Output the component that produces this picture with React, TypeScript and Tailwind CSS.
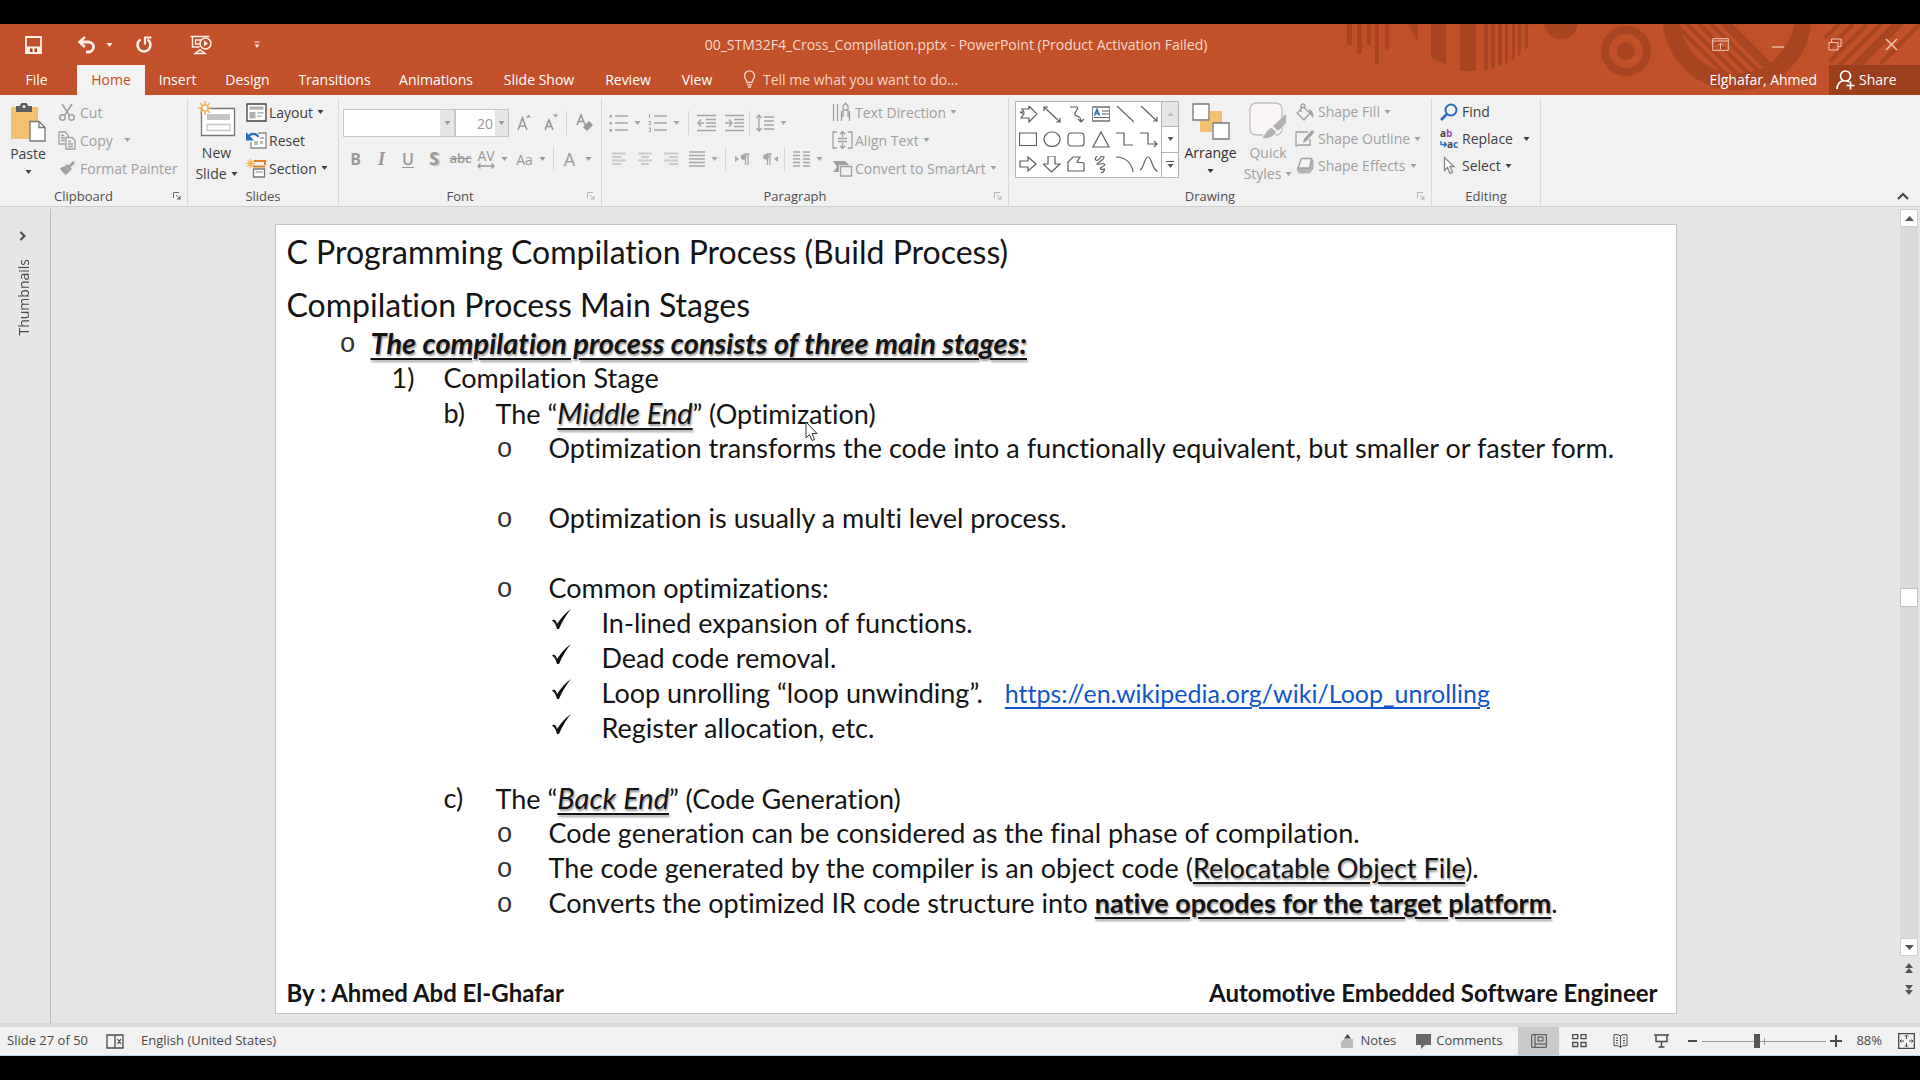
import type { ReactNode } from "react";

/* ---------- small building blocks ---------- */

function Svg({ w, h, children, className = "" }: { w: number; h: number; children: ReactNode; className?: string }) {
  return (
    <svg
      width={w}
      height={h}
      viewBox={`0 0 ${w} ${h}`}
      fill="none"
      stroke="currentColor"
      strokeWidth="1.3"
      className={"shrink-0 " + className}
      aria-hidden="true"
    >
      {children}
    </svg>
  );
}

function Caret({ className = "" }: { className?: string }) {
  return (
    <Svg w={7} h={4} className={className}>
      <path d="M0.5 0h6L3.5 4z" fill="currentColor" stroke="none" />
    </Svg>
  );
}

function Launcher({ className = "" }: { className?: string }) {
  return (
    <button aria-label="Open dialog" className={"absolute right-0.5 bottom-0 flex h-5 w-3 items-center " + className}>
      <Svg w={8} h={8}>
        <path d="M0.5 6V0.5H6M3 3l2 2" strokeWidth="1" />
        <path d="M7.5 3.5v4h-4z" fill="currentColor" stroke="none" />
      </Svg>
    </button>
  );
}

function Group({ label, width, labelPad = "", launcher, children }: { label: string; width: string; labelPad?: string; launcher?: string; children: ReactNode }) {
  return (
    <section aria-label={label} className={"relative flex shrink-0 flex-col border-r border-[#d8d8d8] " + width}>
      <div className="flex h-[88px]">{children}</div>
      <div className={"text-center text-[13px] leading-5 text-[#505050] " + labelPad}>{label}</div>
      {launcher && <Launcher className={launcher} />}
    </section>
  );
}

function RowButton({ icon, label, caret, tone, gap = "ml-[5px]" }: { icon: ReactNode; label: string; caret?: boolean; tone: string; gap?: string }) {
  return (
    <button className={"flex items-center gap-0.5 text-[14px] whitespace-nowrap " + tone}>
      <span className="flex w-[22px] justify-center">{icon}</span>
      <span>{label}</span>
      {caret && <Caret className={gap} />}
    </button>
  );
}

function Cell({ w, label, children }: { w: string; label: string; children: ReactNode }) {
  return (
    <button aria-label={label} className={"flex h-7 shrink-0 items-center justify-center gap-1.5 " + w}>
      {children}
    </button>
  );
}

function Divider() {
  return <span className="h-6 w-px shrink-0 bg-[#d4d4d4]" />;
}

const DARK = "text-[#3f3f3f]";
const DIM = "text-[#a0a0a0]";

/* ---------- title bar ---------- */

function Decoration() {
  return (
    <svg width="580" height="71" viewBox="0 0 580 71" className="absolute top-0 right-0" fill="#a94522" aria-hidden="true">
      <defs>
        <clipPath id="disc">
          <circle cx="397" cy="-8" r="58" />
        </clipPath>
      </defs>
      <path d="M7 0h5v21H7zM17 0h5v30h-5zM27 0h4v21h-4zM35 0h4v40h-4zM45 0h4v26h-4z" />
      <path d="M68 0h10v18zM91 0h15v41L91 33zM120 0h16v47h-16z" />
      <path d="M144 0h4v46h-4zM151 0h4v44l-4 1zM158 0h4v41l-4 2zM165 0h3v38l-3 2zM172 0h3v34l-3 3zM178 0h3v29l-3 3zM185 0h3v22l-3 4zM192 0h2v4z" />
      <circle cx="221" cy="-2" r="17" />
      <circle cx="286" cy="27" r="21" fill="none" stroke="#a94522" strokeWidth="8" />
      <circle cx="286" cy="27" r="9" />
      <circle cx="397" cy="-8" r="66" fill="none" stroke="#a94522" strokeWidth="17" />
      <g clipPath="url(#disc)" stroke="#a94522" strokeWidth="4">
        <path d="M335 0l60 60M347 0l60 60M359 0l60 60M371 0l60 60" />
        <path d="M384 -2l60 60" strokeWidth="9" />
      </g>
      <g stroke="#a94522" strokeWidth="4">
        <path d="M499 0l-14 14M513 0l-24 24M527 0l-38 38M541 0l-46 46" />
        <path d="M562 -4l-48 48" strokeWidth="9" />
        <path d="M580 0l-40 40" />
      </g>
    </svg>
  );
}

const tabs: [string, string][] = [
  ["Insert", "w-[65px]"],
  ["Design", "w-[75px]"],
  ["Transitions", "w-[99px]"],
  ["Animations", "w-[104px]"],
  ["Slide Show", "w-[102px]"],
  ["Review", "w-[76px]"],
  ["View", "w-[62px]"],
];

function Header() {
  return (
    <header className="relative shrink-0 bg-[#c2502a] text-white">
      <Decoration />
      <div className="relative grid h-[41px] grid-cols-[1fr_auto_1fr] items-center text-[#fdeee6]">
        <div className="flex items-center pl-[25px]">
          <button aria-label="Save">
            <Svg w={17} h={18}>
              <path d="M1 1h15v16H1z" strokeWidth="1.8" />
              <path d="M1 10.500h15v6H1z" fill="currentColor" stroke="none" />
              <path d="M5 12.500h2.500v3.500H5zM9.500 12.500H12v3.500H9.500z" fill="#b03c16" stroke="none" />
            </Svg>
          </button>
          <button aria-label="Undo" className="ml-[35px]">
            <Svg w={19} h={18}>
              <path d="M3 6h8.500a5 5 0 0 1 0 10H9" strokeWidth="2.800" />
              <path d="M8 1L2.500 6 8 11" strokeWidth="2.600" />
            </Svg>
          </button>
          <button aria-label="Undo list" className="ml-2.5">
            <Caret />
          </button>
          <button aria-label="Redo" className="ml-[22px]">
            <Svg w={18} h={18}>
              <path d="M5.500 3.500a6.500 6.500 0 1 0 7 0" strokeWidth="2.600" />
              <path d="M10 8.500V1.500h6.500" strokeWidth="2.200" />
            </Svg>
          </button>
          <button aria-label="Start from beginning" className="ml-[37px]">
            <Svg w={23} h={20}>
              <path d="M0.500 1.500h19M2.500 2v10h7M10 14v2M5 18.500l4-3h2l4 3z" strokeWidth="1.500" />
              <path d="M5.500 5h5v4h-5z" />
              <circle cx="15.500" cy="8.500" r="5.500" fill="#c2502a" strokeWidth="1.500" />
              <path d="M14 5.500l4 3-4 3z" fill="currentColor" stroke="none" />
            </Svg>
          </button>
          <button aria-label="Customize quick access toolbar" className="ml-[41px]">
            <Svg w={6} h={8}>
              <path d="M0.500 1h5" strokeWidth="1" />
              <path d="M0.500 3.500h5L3 7z" fill="currentColor" stroke="none" />
            </Svg>
          </button>
        </div>
        <h1 className="pr-2 text-[14px] text-[#f6d9cb]">00_STM32F4_Cross_Compilation.pptx - PowerPoint (Product Activation Failed)</h1>
        <div className="flex items-center justify-end pr-[22px] text-[#f0c6b4]">
          <button aria-label="Ribbon display options">
            <Svg w={17} h={13}>
              <path d="M0.700 0.700h15.600v11.600H0.700zM0.700 3h15.600M8.500 11V5.500M5.500 8l3-3 3 3" strokeWidth="1" />
            </Svg>
          </button>
          <button aria-label="Minimize" className="ml-[42px]">
            <Svg w={14} h={13}>
              <path d="M1 9h12" />
            </Svg>
          </button>
          <button aria-label="Restore" className="ml-[43px]">
            <Svg w={14} h={13}>
              <path d="M1 4.500h9V12H1zM3.500 4V1H13v7.500h-3" strokeWidth="1" />
            </Svg>
          </button>
          <button aria-label="Close" className="ml-[43px]">
            <Svg w={13} h={13}>
              <path d="M1 1l11 11M12 1L1 12" strokeWidth="1.500" />
            </Svg>
          </button>
        </div>
      </div>
      <nav aria-label="Ribbon tabs" className="relative flex h-[30px] items-stretch text-[14px]">
        <button className="w-[77px] pr-1 pb-0.5">File</button>
        <button className="w-[68px] bg-[#f3f3f3] pb-0.5 text-[#cb4a21]">Home</button>
        {tabs.map(([name, w]) => (
          <button key={name} className={"pb-0.5 " + w}>
            {name}
          </button>
        ))}
        <label className="ml-[15px] flex items-center gap-[7px] pb-0.5 text-[#f6d5c6]">
          <Svg w={13} h={18}>
            <path d="M4 12.500C4 10 1.500 9 1.500 5.800a5 5 0 0 1 10 0C11.500 9 9 10 9 12.500zM4 14.800h5M5 17h3" />
          </Svg>
          <input
            type="text"
            aria-label="Tell me what you want to do"
            placeholder="Tell me what you want to do..."
            className="w-[220px] bg-transparent text-[14px] outline-none placeholder:text-[#f6d5c6]"
          />
        </label>
        <button className="ml-auto pr-3 pb-0.5">Elghafar, Ahmed</button>
        <button className="flex w-[91px] items-center gap-1 bg-[#9c3f1d] pb-0.5 pl-[7px]">
          <Svg w={19} h={21}>
            <circle cx="9.500" cy="7" r="5" strokeWidth="1.700" />
            <path d="M1 20c0-4 2-7 6-8.500M11 11.500l2 1.500M14.500 12.500v8M10.500 16.500h8" strokeWidth="1.700" />
          </Svg>
          Share
        </button>
      </nav>
    </header>
  );
}

/* ---------- ribbon groups ---------- */

function ClipboardGroup() {
  return (
    <Group label="Clipboard" width="w-[188px]" labelPad="pr-5" launcher="text-[#666]">
      <button className={"flex w-[56px] flex-col items-center pt-[5px] text-[14px] leading-5 " + DARK}>
        <Svg w={36} h={39}>
          <path d="M1 4h27v32H1z" fill="#f2c06e" stroke="none" />
          <path d="M6 3h4a4 3.500 0 0 1 8 0h4v6H6z" fill="#5d5d5d" stroke="none" />
          <circle cx="14" cy="3.500" r="1.500" fill="#f1f1f1" stroke="none" />
          <path d="M20 18.500h9l6 6V38H20z" fill="#fff" stroke="#777" />
          <path d="M29 18.500v6h6" stroke="#777" />
        </Svg>
        <span className="mt-0.5">Paste</span>
        <Caret className="mt-1.5" />
      </button>
      <div className="grid auto-rows-[28px]">
        <RowButton
          tone={DIM}
          label="Cut"
          icon={
            <Svg w={16} h={18}>
              <path d="M3 1l7.500 11.500M13 1L5.500 12.500" strokeWidth="1.600" />
              <circle cx="3.500" cy="14.500" r="2.700" strokeWidth="1.500" />
              <circle cx="12.500" cy="14.500" r="2.700" strokeWidth="1.500" />
            </Svg>
          }
        />
        <RowButton
          tone={DIM}
          label="Copy"
          caret
          gap="ml-[9px]"
          icon={
            <Svg w={18} h={19}>
              <path d="M7 13H1V1h6l3 3v2M3 4.500h3M3 7h4M3 9.500h4" />
              <path d="M8 6.500h6l3 3V18H8zM10 10.500h3M10 13h5M10 15.500h5" />
            </Svg>
          }
        />
        <RowButton
          tone={DIM}
          label="Format Painter"
          icon={
            <Svg w={17} h={16}>
              <path d="M1 8l5-2 5 5-4 4c-2-1-5-4-6-7z" fill="currentColor" stroke="none" />
              <path d="M7 5l5 5M10 7l5-5" strokeWidth="3" />
            </Svg>
          }
        />
      </div>
    </Group>
  );
}

function SlidesGroup() {
  return (
    <Group label="Slides" width="w-[151px]">
      <button className={"flex w-[57px] flex-col items-center pt-[3px] text-[14px] leading-[21px] " + DARK}>
        <Svg w={38} h={38}>
          <path d="M3.500 7.500h33v27h-33z" fill="#fff" stroke="#777" />
          <path d="M9 13h23v6H9z" fill="#c4c4c4" stroke="none" />
          <path d="M9 23.500h23v6H9z" stroke="#c8c8c8" />
          <path d="M7 0v14M0 7h14M2 2l10 10M12 2L2 12" stroke="#eeb75c" strokeWidth="1.600" />
          <circle cx="7" cy="7" r="3" fill="#fff" stroke="#eeb75c" strokeWidth="1.600" />
        </Svg>
        <span className="mt-[3px]">New</span>
        <span className="flex items-center gap-1">
          Slide <Caret />
        </span>
      </button>
      <div className="grid auto-rows-[28px]">
        <RowButton
          tone={DARK}
          label="Layout"
          caret
          gap="ml-[2px]"
          icon={
            <Svg w={21} h={19}>
              <path d="M1 1h19v17H1z" fill="#fff" />
              <path d="M3.500 3.500h14v3h-14zM3.500 9h6v6.500h-6zM11.500 9h6v1.500h-6zM11.500 12.500h4v1.500h-4z" fill="#b0b0b0" stroke="none" />
            </Svg>
          }
        />
        <RowButton
          tone={DARK}
          label="Reset"
          icon={
            <Svg w={21} h={18}>
              <path d="M12 2h8v15H5v-6" fill="#fff" stroke="#888" />
              <path d="M8 10h4v4H8zM14 6h4v2h-4zM14 10h3v3h-3z" fill="#b8b8b8" stroke="none" />
              <path d="M2 6.500C4 2 10 1.500 12.500 6" stroke="#2b6cb8" strokeWidth="2.200" />
              <path d="M0 1v8.500h8z" fill="#2b6cb8" stroke="none" />
            </Svg>
          }
        />
        <RowButton
          tone={DARK}
          label="Section"
          caret
          gap="ml-[2px]"
          icon={
            <Svg w={21} h={19}>
              <path d="M8 2h11v4" stroke="#e0802f" strokeWidth="2.200" />
              <path d="M7 7.500h12" stroke="#e0802f" strokeWidth="2" />
              <path d="M7.500 10h11v8h-11z" fill="#fff" stroke="#777" />
              <path d="M9.500 13h7" stroke="#999" />
              <path d="M4.500 0v9M0 4.500h9M1.500 1.500l6 6M7.500 1.500l-6 6" stroke="#eeb75c" strokeWidth="1.200" />
            </Svg>
          }
        />
      </div>
    </Group>
  );
}

function FontGroup() {
  return (
    <Group label="Font" width="w-[263px]" labelPad="pr-5" launcher="text-[#b5b5b5]">
      <div className="flex flex-col pl-1">
        <div className="mt-[11px] flex h-7 items-center text-[#999]">
          <label className="relative flex shrink-0">
            <select aria-label="Font" className="h-7 w-[112px] appearance-none border border-[#c6c6c6] bg-white text-[14px]">
              <option></option>
            </select>
            <span className="pointer-events-none absolute inset-y-px right-px flex w-[14px] items-center justify-center bg-[#e6e6e6]">
              <Caret />
            </span>
          </label>
          <label className="relative flex shrink-0">
            <select aria-label="Font size" className="h-7 w-[54px] appearance-none border border-[#c6c6c6] bg-white pl-[21px] text-[14px] text-[#999]">
              <option>20</option>
            </select>
            <span className="pointer-events-none absolute inset-y-px right-px flex w-[13px] items-center justify-center bg-[#e6e6e6]">
              <Caret />
            </span>
          </label>
          <Cell w="w-[30px]" label="Increase font size">
            <Svg w={14} h={18}>
              <path d="M1 16L5.500 4 10 16M2.500 12h6" strokeWidth="1.600" />
              <path d="M9 3.500l2.500-3 2.500 3z" fill="currentColor" stroke="none" />
            </Svg>
          </Cell>
          <Cell w="w-[23px]" label="Decrease font size">
            <Svg w={14} h={18}>
              <path d="M1 16L5 6l4 10M2.500 12.500h5" strokeWidth="1.600" />
              <path d="M9 0.500h5l-2.500 3z" fill="currentColor" stroke="none" />
            </Svg>
          </Cell>
          <span className="w-1" />
          <Divider />
          <Cell w="w-[34px]" label="Clear formatting">
            <Svg w={17} h={18}>
              <path d="M1 11L5 1l4 10M2.500 7.500h5" strokeWidth="1.600" />
              <path d="M7 13l6-6 4 4-6 6z" fill="currentColor" stroke="none" />
            </Svg>
          </Cell>
        </div>
        <div className="mt-[8px] flex h-7 items-center text-[16px] text-[#999]">
          <Cell w="w-[25px]" label="Bold">
            <b>B</b>
          </Cell>
          <Cell w="w-[27px]" label="Italic">
            <b className="font-['Liberation_Serif'] text-[18px] italic">I</b>
          </Cell>
          <Cell w="w-[26px]" label="Underline">
            <span className="font-semibold underline underline-offset-2">U</span>
          </Cell>
          <Cell w="w-[26px]" label="Text shadow">
            <b className="text-[17px] [text-shadow:2px_1px_1px_#bbb]">S</b>
          </Cell>
          <Cell w="w-[27px]" label="Strikethrough">
            <span className="text-[13px] font-semibold line-through">abc</span>
          </Cell>
          <Cell w="w-[37px]" label="Character spacing">
            <span className="flex flex-col items-center text-[14px] leading-[14px]">
              AV
              <Svg w={18} h={6}>
                <path d="M1 3h16M3.500 0.500L1 3l2.500 2.500M14.500 0.500L17 3l-2.500 2.500" />
              </Svg>
            </span>
            <Caret />
          </Cell>
          <Cell w="w-[40px]" label="Change case">
            <span className="text-[14px]">Aa</span>
            <Caret />
          </Cell>
          <span className="w-0.5" />
          <Divider />
          <Cell w="w-[48px]" label="Font color">
            <span className="mr-1 text-[18px]">A</span>
            <Caret />
          </Cell>
        </div>
      </div>
    </Group>
  );
}

const leftBars = "M0 1.500h14M0 5h9M0 8.500h14M0 12h9";
const centerBars = "M0 1.500h14M3 5h8M0 8.500h14M3 12h8";
const rightBars = "M0 1.500h14M5 5h9M0 8.500h14M5 12h9";

function ParagraphGroup() {
  return (
    <Group label="Paragraph" width="w-[407px]" labelPad="pr-5" launcher="text-[#b5b5b5]">
      <div className="flex w-[229px] shrink-0 flex-col pl-1 text-[#a6a6a6]">
        <div className="mt-[11px] flex h-7 items-center">
          <Cell w="w-[38px]" label="Bullets">
            <Svg w={19} h={18}>
              <path d="M6 2h13M6 9h13M6 16h13" />
              <path d="M0.500 1h2.500v2.500H0.500zM0.500 8h2.500v2.500H0.500zM0.500 15h2.500v2.500H0.500z" fill="currentColor" stroke="none" />
            </Svg>
            <Caret />
          </Cell>
          <Cell w="w-[40px]" label="Numbering">
            <Svg w={19} h={18}>
              <path d="M6 2h13M6 9h13M6 16h13" />
              <path d="M1.500 0v4M0.500 7.500h2v3h-2M0.500 14h2v3.500h-2" strokeWidth="1" />
            </Svg>
            <Caret />
          </Cell>
          <span className="w-1" />
          <Divider />
          <Cell w="w-[34px]" label="Decrease indent">
            <Svg w={19} h={18}>
              <path d="M0 1.500h19M9 5.500h10M9 9h10M9 12.500h10M0 16.500h19M1 9h6M4 5.500L1 9l3 3.500" strokeWidth="1.500" />
            </Svg>
          </Cell>
          <Cell w="w-[22px]" label="Increase indent">
            <Svg w={19} h={18}>
              <path d="M0 1.500h19M9 5.500h10M9 9h10M9 12.500h10M0 16.500h19M0 9h7M4 5.500L7 9l-3 3.500" strokeWidth="1.500" />
            </Svg>
          </Cell>
          <span className="w-1" />
          <Divider />
          <Cell w="w-[42px]" label="Line spacing">
            <Svg w={18} h={18}>
              <path d="M8 3h10M8 7h10M8 11h10M8 15h10M3 1v16M0.500 4L3 1l2.500 3M0.500 14L3 17l2.500-3" />
            </Svg>
            <Caret />
          </Cell>
        </div>
        <div className="mt-[8px] flex h-7 items-center">
          <Cell w="w-[26px]" label="Align left">
            <Svg w={14} h={14} className="opacity-50">
              <path d={leftBars} strokeWidth="2" />
            </Svg>
          </Cell>
          <Cell w="w-[26px]" label="Center">
            <Svg w={14} h={14} className="opacity-50">
              <path d={centerBars} strokeWidth="2" />
            </Svg>
          </Cell>
          <Cell w="w-[26px]" label="Align right">
            <Svg w={14} h={14} className="opacity-50">
              <path d={rightBars} strokeWidth="2" />
            </Svg>
          </Cell>
          <Cell w="w-[38px]" label="Justify">
            <Svg w={16} h={16}>
              <path d="M0 1h16M0 4.500h16M0 8h16M0 11.500h16M0 15h16" />
            </Svg>
            <Caret />
          </Cell>
          <span className="w-1" />
          <Divider />
          <Cell w="w-[33px]" label="Left to right">
            <Svg w={15} h={13}>
              <path d="M0 3l4 3-4 3z" fill="currentColor" stroke="none" />
              <path d="M10.500 12V1M13 12V1M14.500 1H9.500" />
              <circle cx="8.500" cy="4" r="2.800" fill="currentColor" stroke="none" />
            </Svg>
          </Cell>
          <Cell w="w-[23px]" label="Right to left">
            <Svg w={15} h={13}>
              <path d="M15 3l-4 3 4 3z" fill="currentColor" stroke="none" />
              <path d="M4.500 12V1M7 12V1M8.500 1h-5" />
              <circle cx="3" cy="4" r="2.800" fill="currentColor" stroke="none" />
            </Svg>
          </Cell>
          <span className="w-1" />
          <Divider />
          <Cell w="w-[46px]" label="Columns">
            <Svg w={17} h={16}>
              <path d="M0 1h7M0 4.500h7M0 8h7M0 11.500h7M0 15h7M10 1h7M10 4.500h7M10 8h7M10 11.500h7M10 15h7" />
            </Svg>
            <Caret />
          </Cell>
        </div>
      </div>
      <div className="grid auto-rows-[28px]">
        <RowButton
          tone={DIM}
          label="Text Direction"
          caret
          gap="ml-[2px]"
          icon={
            <Svg w={20} h={20}>
              <path d="M1.500 2v17M5.500 2v17M9.500 9v10M17.500 9v10M11 15V4l2.500-3L16 4v11M11 8h5" />
            </Svg>
          }
        />
        <RowButton
          tone={DIM}
          label="Align Text"
          caret
          gap="ml-[2px]"
          icon={
            <Svg w={21} h={18}>
              <path d="M5 1H1v16h4M16 1h4v16h-4M6 7.500h9M6 10.500h9M10.500 0v6M10.500 18v-6M8 3l2.500-2.500L13 3M8 15l2.500 2.500L13 15" />
            </Svg>
          }
        />
        <RowButton
          tone={DIM}
          label="Convert to SmartArt"
          caret
          gap="ml-[2px]"
          icon={
            <Svg w={21} h={17}>
              <path d="M1 1h12l4 4H7v7H1l4-5z" fill="currentColor" stroke="none" />
              <path d="M8.500 6.500h11v9.500h-11z" fill="#f1f1f1" />
            </Svg>
          }
        />
      </div>
    </Group>
  );
}

const shapes: [string, string][] = [
  ["Block arrow", "M1 6l4 0-2-3h7V0l8 8-8 8v-4H2l3-4z"],
  ["Double arrow", "M1 1l16 15M1 5V1h4M17 12v4h-4"],
  ["Curved connector", "M3 1h6c5 0-3 6-1 8s6 0 6 7M11 13l3 3 3-3"],
  ["Text box", "M0 1h18M0 15h18M10 5h7M10 8h7M2 11.500h15"],
  ["Line", "M1 0l17 16"],
  ["Arrow line", "M1 0l16 15M17 11v4h-4"],
  ["Rectangle", "M0.500 2h17v12.500h-17z"],
  ["Oval", "M9 1a8 7.200 0 1 0 0.100 0z"],
  ["Rounded rectangle", "M4 2h10a3 3 0 0 1 3 3v7a3 3 0 0 1-3 3H4a3 3 0 0 1-3-3V5a3 3 0 0 1 3-3z"],
  ["Triangle", "M9 1l8 15H1z"],
  ["Elbow connector", "M0 2h8v12h9"],
  ["Elbow arrow", "M0 2h8v11h9M14 10l3 3-3 3"],
  ["Right arrow", "M1 5h8V1l8 7-8 7v-4H1z"],
  ["Down arrow", "M5 0h7v8h5l-8.500 8L0 8h5z"],
  ["Freeform", "M6 1h7l-3 5 7 1v8H1V6z"],
  ["Scribble", "M5 0c-4 4 0 6 3 2s6-1 2 2-8 5-2 4 6 1 2 3 0 3 2 2-1 5-3 3"],
  ["Arc", "M0 1c9 0 16 6 17 15"],
  ["Curve", "M0 14C4 13 4 1 8 1s4 14 10 14"],
];

function DrawingGroup() {
  return (
    <Group label="Drawing" width="w-[423px]" labelPad="pr-5" launcher="text-[#b5b5b5]">
      <div className="mt-[3px] ml-[6px] flex h-[77px] w-[164px] shrink-0 border border-[#b4b4b4] bg-white">
        <div className="grid flex-1 grid-cols-6 text-[#5f5f5f]">
          {shapes.map(([name, d]) => (
            <button key={name} aria-label={name} className="flex items-center justify-center">
              <Svg w={18} h={17}>
                {name === "Text box" && (
                  <>
                    <path d="M0.500 1h17v14h-17z" stroke="#8a8a8a" strokeWidth="1" />
                    <path d="M2.500 9.500l2.500-6 2.500 6M3.500 7.500h3" stroke="#2b6cb8" strokeWidth="1.600" />
                  </>
                )}
                <path d={d} strokeWidth="1.200" />
              </Svg>
            </button>
          ))}
        </div>
        <div className="flex w-[17px] flex-col divide-y divide-[#b4b4b4] border-l border-[#b4b4b4] text-[#555]">
          <button aria-label="Scroll shapes up" className="flex flex-1 items-center justify-center bg-[#e6e6e6] text-[#bbb]">
            <Caret className="rotate-180" />
          </button>
          <button aria-label="Scroll shapes down" className="flex flex-1 items-center justify-center">
            <Caret />
          </button>
          <button aria-label="More shapes" className="flex flex-1 flex-col items-center justify-center gap-0.5">
            <span className="h-px w-2 bg-[#555]" />
            <Caret />
          </button>
        </div>
      </div>
      <button className="flex w-[63px] shrink-0 flex-col items-center pt-[5px] text-[14px] leading-5 text-[#2f2f2f]">
        <Svg w={38} h={37}>
          <path d="M18 8h12v12H18zM8 18h12v11H8z" fill="#f2c06e" stroke="none" />
          <path d="M1 1h16v16H1zM21 20h16v16H21z" fill="#fff" stroke="#777" />
        </Svg>
        <span className="mt-[3px]">Arrange</span>
        <Caret className="mt-1.5" />
      </button>
      <button className={"flex w-[52px] shrink-0 flex-col items-center pt-1 text-[14px] leading-[21px] " + DIM}>
        <Svg w={38} h={38}>
          <path d="M7 1h20a6 6 0 0 1 6 6v20a6 6 0 0 1-6 6H7a6 6 0 0 1-6-6V7a6 6 0 0 1 6-6z" fill="#f8f4f8" stroke="#bdbdbd" />
          <path d="M37 12v9l-8 8-5-5z" fill="#b2b2b2" stroke="none" />
          <path d="M23 25l5 5c-3 6-9 7-17 7 5-3 6-11 12-12z" fill="#b2b2b2" stroke="#f1f1f1" />
        </Svg>
        <span className="mt-0.5">Quick</span>
        <span className="flex items-center gap-1">
          Styles <Caret />
        </span>
      </button>
      <div className="grid auto-rows-[27px]">
        <RowButton
          tone={DIM}
          label="Shape Fill"
          caret
          gap="ml-[2px]"
          icon={
            <Svg w={18} h={18}>
              <path d="M7 4l7 6-6 7-7-7zM5 9V3a2 2 0 0 1 4 0v4" />
              <path d="M13 6c4 2 5 5 4 9l-3-4z" fill="currentColor" stroke="none" />
            </Svg>
          }
        />
        <RowButton
          tone={DIM}
          label="Shape Outline"
          caret
          gap="ml-[2px]"
          icon={
            <Svg w={20} h={17}>
              <path d="M13 2H1v14l3-1h11V9" />
              <path d="M8 13l1-4 8-9 2.500 2-8 9z" fill="currentColor" stroke="none" />
            </Svg>
          }
        />
        <RowButton
          tone={DIM}
          label="Shape Effects"
          caret
          gap="ml-[2px]"
          icon={
            <Svg w={18} h={17}>
              <path d="M5 1h10l2.500 2v9l-4 4.500H3L0.500 13z" fill="#b4b4b4" stroke="none" />
              <path d="M5.500 1.500h10l-2 9.500H2z" fill="#f5f5f5" />
            </Svg>
          }
        />
      </div>
    </Group>
  );
}

function EditingGroup() {
  return (
    <Group label="Editing" width="w-[109px]">
      <div className="grid auto-rows-[27px] pl-1.5">
        <RowButton
          tone={DARK}
          label="Find"
          icon={
            <Svg w={18} h={18} className="text-[#2b6cb8]">
              <circle cx="11" cy="7" r="5.500" strokeWidth="2" />
              <path d="M7 11l-6 6" strokeWidth="2.600" />
            </Svg>
          }
        />
        <RowButton
          tone={DARK}
          label="Replace"
          caret
          gap="ml-[8px]"
          icon={
            <span className="flex flex-col text-[10px] leading-[11px] font-bold">
              <span className="text-left">
                a<span className="text-[#9a52c0]">b</span>
              </span>
              <span className="flex items-center text-[#444]">
                <Svg w={7} h={7} className="text-[#2b6cb8]">
                  <path d="M1 0v3.500h5M4 1l2.500 2.500L4 6" />
                </Svg>
                a<span className="text-[#2b6cb8]">c</span>
              </span>
            </span>
          }
        />
        <RowButton
          tone={DARK}
          label="Select"
          caret
          gap="ml-[2px]"
          icon={
            <Svg w={13} h={19}>
              <path d="M1.500 1.500v13l3-3 2.500 6 2.500-1-2.500-6h4z" fill="#fff" stroke="#888" />
            </Svg>
          }
        />
      </div>
    </Group>
  );
}

function Ribbon() {
  return (
    <div className="flex h-28 shrink-0 border-b border-[#d0d0d0] bg-[#f1f1f1] pt-[3px]">
      <ClipboardGroup />
      <SlidesGroup />
      <FontGroup />
      <ParagraphGroup />
      <DrawingGroup />
      <EditingGroup />
      <button aria-label="Collapse the ribbon" className="mt-auto mr-[11px] mb-1.5 ml-auto text-[#444]">
        <Svg w={12} h={8}>
          <path d="M1 7l5-5 5 5" strokeWidth="2" />
        </Svg>
      </button>
    </div>
  );
}

/* ---------- slide ---------- */

function Line({ indent, marker, markerWidth, children }: { indent: string; marker: ReactNode; markerWidth: string; children: ReactNode }) {
  return (
    <li className={"flex h-[35px] " + indent}>
      <span className={"shrink-0 " + markerWidth}>{marker}</span>
      <span className="whitespace-nowrap">{children}</span>
    </li>
  );
}

const circle = <span className="block font-['Liberation_Mono'] text-[27px] leading-[40px] text-[#333]">o</span>;
const check = (
  <svg width="22" height="22" viewBox="0 0 22 22" className="mt-1 ml-0.5" aria-hidden="true">
    <path d="M1 12c1-2 4-2 5 3C10 9 14 4 20 0c-4 5-9 12-12 20H6C5 16 3 12 1 12z" fill="#111" />
  </svg>
);
const shadow = "[text-shadow:1px_2px_2px_#999]";

function L4({ children }: { children: ReactNode }) {
  return (
    <Line indent="pl-[210px]" marker={circle} markerWidth="w-[52px]">
      {children}
    </Line>
  );
}

function L5({ children }: { children: ReactNode }) {
  return (
    <Line indent="pl-[262px]" marker={check} markerWidth="w-[53px]">
      {children}
    </Line>
  );
}

function Slide() {
  return (
    <article className="relative flex aspect-[1402/790] w-full max-w-[1402px] flex-col border border-[#c3c3c3] bg-white pt-1 pr-[18px] pb-[3px] pl-[11px] font-['Lato',sans-serif] text-[#141414] [font-variant-ligatures:none]">
      <h2 className="text-[32px] leading-[46px]">C Programming Compilation Process (Build Process)</h2>
      <h3 className="mt-[9px] text-[32px] leading-[41px]">Compilation Process Main Stages</h3>
      <ul className="text-[27px] leading-[35px]">
        <Line indent="pl-[53px]" marker={circle} markerWidth="w-[31px]">
          <span className={"text-[29px] font-bold italic underline decoration-2 underline-offset-4 " + shadow}>The compilation process consists of three main stages:</span>
        </Line>
        <Line indent="pl-[105px]" marker="1)" markerWidth="w-[52px]">
          Compilation Stage
        </Line>
        <Line indent="pl-[157px]" marker="b)" markerWidth="w-[52px]">
          The “<span className={"text-[29px] italic underline decoration-2 underline-offset-4 " + shadow}>Middle End</span>” (Optimization)
        </Line>
        <L4>Optimization transforms the code into a functionally equivalent, but smaller or faster form.</L4>
        <li className="h-[35px]" aria-hidden="true" />
        <L4>Optimization is usually a multi level process.</L4>
        <li className="h-[35px]" aria-hidden="true" />
        <L4>Common optimizations:</L4>
        <L5>In-lined expansion of functions.</L5>
        <L5>Dead code removal.</L5>
        <L5>
          Loop unrolling “loop unwinding”.
          <a href="https://en.wikipedia.org/wiki/Loop_unrolling" className="ml-[22px] text-[25px] text-[#1155cc] underline decoration-2 underline-offset-4">
            https://en.wikipedia.org/wiki/Loop_unrolling
          </a>
        </L5>
        <L5>Register allocation, etc.</L5>
        <li className="h-[35px]" aria-hidden="true" />
        <Line indent="pl-[157px]" marker="c)" markerWidth="w-[52px]">
          The “<span className={"text-[29px] italic underline decoration-2 underline-offset-4 " + shadow}>Back End</span>” (Code Generation)
        </Line>
        <L4>Code generation can be considered as the final phase of compilation.</L4>
        <L4>
          The code generated by the compiler is an object code (
          <span className={"underline decoration-2 underline-offset-4 " + shadow}>Relocatable Object File</span>).
        </L4>
        <L4>
          Converts the optimized IR code structure into{" "}
          <b className={"underline decoration-2 underline-offset-4 " + shadow}>native opcodes for the target platform</b>.
        </L4>
      </ul>
      <footer className="mt-auto flex justify-between text-[24px] leading-[35px] font-bold">
        <span>By : Ahmed Abd El-Ghafar</span>
        <span>Automotive Embedded Software Engineer</span>
      </footer>
      <svg width="14" height="21" viewBox="0 0 14 21" className="absolute top-[196px] left-[529px]" aria-hidden="true">
        <path d="M1 1v16l3.500-3.500L7 19.500l2.500-1L7 12.500h5z" fill="#fff" stroke="#333" />
      </svg>
    </article>
  );
}

function Scrollbar() {
  return (
    <div className="flex w-5 shrink-0 flex-col pt-0.5 pr-0.5 text-[#555]">
      <button aria-label="Scroll up" className="flex h-[18px] items-center justify-center border border-[#cfcfcf] bg-white">
        <Svg w={9} h={5}>
          <path d="M0 5h9L4.500 0z" fill="currentColor" stroke="none" />
        </Svg>
      </button>
      <div className="flex flex-1 flex-col bg-[#dadada]">
        <div className="flex-[360]" />
        <div className="h-[19px] border border-[#c2c2c2] bg-white" />
        <div className="flex-[331]" />
      </div>
      <button aria-label="Scroll down" className="flex h-[18px] items-center justify-center border border-[#cfcfcf] bg-white">
        <Svg w={9} h={5}>
          <path d="M0 0h9L4.500 5z" fill="currentColor" stroke="none" />
        </Svg>
      </button>
      <button aria-label="Previous slide" className="mt-[7px] flex flex-col items-center">
        <Svg w={10} h={11}>
          <path d="M5 0l4 5H1zM5 5l4 5H1z" fill="currentColor" stroke="none" />
        </Svg>
      </button>
      <button aria-label="Next slide" className="mt-[10px] mb-[28px] flex flex-col items-center">
        <Svg w={10} h={11}>
          <path d="M5 6L1 1h8zM5 11L1 6h8z" fill="currentColor" stroke="none" />
        </Svg>
      </button>
    </div>
  );
}

/* ---------- status bar ---------- */

function StatusBar() {
  return (
    <footer className="flex h-[33px] shrink-0 items-center border-t-4 border-b border-t-[#dadada] border-b-[#bcd3e2] bg-[#f1f1f1] text-[13px] text-[#4a4a4a]">
      <span className="pl-[7px]">Slide 27 of 50</span>
      <button aria-label="Spelling" className="ml-[18px]">
        <Svg w={18} h={15}>
          <path d="M9 2v12H1V1h8v2M9 14h8V1H9M11.500 5l3.500 5M15 5l-3.500 5" />
        </Svg>
      </button>
      <button className="ml-[17px]">English (United States)</button>
      <div className="ml-auto flex h-full items-center">
        <button className="flex items-center gap-1.5">
          <Svg w={13} h={15}>
            <path d="M3 5h9v9H0V8z" fill="#bcbcbc" stroke="none" />
            <path d="M6.500 0L10 4.500H3z" fill="currentColor" stroke="none" />
          </Svg>
          Notes
        </button>
        <button className="ml-5 flex items-center gap-1">
          <Svg w={16} h={15}>
            <path d="M0 0h15v11H9l-4 4v-4H0z" fill="#696969" stroke="none" />
          </Svg>
          Comments
        </button>
        <button aria-label="Normal view" className="ml-4 flex h-full w-[41px] items-center justify-center bg-[#cacaca]">
          <Svg w={16} h={14}>
            <path d="M0.700 0.700h14.600v12.600H0.700zM4 0.700v12.600M4 10h11M7 3h5v4H7z" strokeWidth="1" />
          </Svg>
        </button>
        <button aria-label="Slide sorter" className="flex w-[41px] justify-center">
          <Svg w={15} h={14}>
            <path d="M0.700 0.700h5v4h-5zM9 0.700h5v4H9zM0.700 8.500h5v4h-5zM9 8.500h5v4H9z" />
          </Svg>
        </button>
        <button aria-label="Reading view" className="flex w-[41px] justify-center">
          <Svg w={15} h={14}>
            <path d="M7.500 2L5 0.700H1v11h4L7.500 13.500 10 11.700h4v-11h-4zM7.500 2v11M3 4h2M3 6.500h2M3 9h2M10 4h2M10 6.500h2M10 9h2" strokeWidth="1" />
          </Svg>
        </button>
        <button aria-label="Slide show" className="flex w-[41px] justify-center">
          <Svg w={15} h={14}>
            <path d="M0 1h15M2 1v6.500h11V1M7.500 8v5M4.500 13h6" strokeWidth="1.500" />
          </Svg>
        </button>
        <button aria-label="Zoom out" className="ml-[5px]">
          <Svg w={11} h={12}>
            <path d="M1 6h9" strokeWidth="2" />
          </Svg>
        </button>
        <input
          type="range"
          aria-label="Zoom"
          min={10}
          max={200}
          defaultValue={93}
          className="mx-1 h-4 w-[124px] appearance-none bg-[linear-gradient(#9a9a9a,#9a9a9a),linear-gradient(#9a9a9a,#9a9a9a)] bg-[length:100%_1px,1px_7px] bg-center bg-no-repeat [&::-webkit-slider-thumb]:h-[14px] [&::-webkit-slider-thumb]:w-[6px] [&::-webkit-slider-thumb]:appearance-none [&::-webkit-slider-thumb]:bg-[#555]"
        />
        <button aria-label="Zoom in">
          <Svg w={12} h={12}>
            <path d="M0 6h12M6 0v12" strokeWidth="2" />
          </Svg>
        </button>
        <button className="ml-[14px]">88%</button>
        <button aria-label="Fit slide to window" className="mr-[5px] ml-4">
          <Svg w={17} h={16}>
            <path d="M0.700 0.700h15.600v14.600H0.700z" />
            <path d="M8.500 2v4M7 3.500L8.500 2 10 3.500M8.500 14v-4M7 12.500l1.500 1.500 1.500-1.500M2 8h4M3.500 6.500L2 8l1.500 1.500M15 8h-4M13.500 6.500L15 8l-1.500 1.500" strokeWidth="1" />
          </Svg>
        </button>
      </div>
    </footer>
  );
}

export default function App() {
  return (
    <div className="flex h-screen flex-col overflow-hidden bg-black py-6 font-['Open_Sans','Noto_Sans',sans-serif]">
      <Header />
      <Ribbon />
      <main className="flex min-h-0 flex-1 bg-[#e6e6e6]">
        <aside className="mt-0.5 flex w-[51px] shrink-0 flex-col items-center border-r border-[#b9b9b9] pt-[22px] pr-1 text-[#4a4a4a]">
          <button aria-label="Expand thumbnails">
            <Svg w={8} h={10}>
              <path d="M1.500 1l4 4-4 4" strokeWidth="2" />
            </Svg>
          </button>
          <span className="mt-[18px] rotate-180 text-[14px] [writing-mode:vertical-rl]">Thumbnails</span>
        </aside>
        <div className="flex min-w-0 flex-1 items-start justify-center pt-[17px]">
          <Slide />
        </div>
        <Scrollbar />
      </main>
      <StatusBar />
    </div>
  );
}
